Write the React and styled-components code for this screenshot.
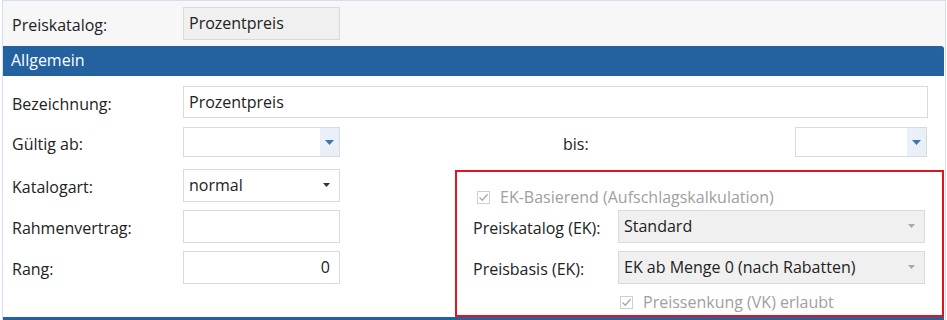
import React from 'react'
import styled, { createGlobalStyle } from 'styled-components'

const GlobalStyle = createGlobalStyle`
    html, body { margin: 0; padding: 0; background: #ffffff; }
    body { font-family: "Open Sans", "Noto Sans", sans-serif; font-size: 16px; color: #222; }
`

function Arrow({ kind }) {
    if (kind === 'date') {
        return (
            <svg width="9" height="5" viewBox="0 0 9 5"><path d="M0 0H9L4.5 5Z" fill="#4a70a8" /></svg>
        )
    }
    return (
        <svg width="7" height="4" viewBox="0 0 7 4"><path d="M0 0H7L3.5 4Z" fill={kind === 'dark' ? '#333' : '#a8a8a8'} /></svg>
    )
}

function Check() {
    return (
        <CheckBox>
            <svg width="11" height="11" viewBox="0 0 11 11">
                <path d="M1.5 5.5L4.3 8.3L9.6 2.2" fill="none" stroke="#a8a8a8" strokeWidth="1.3" />
            </svg>
        </CheckBox>
    )
}

export default function App() {
    return (
        <Page>
            <GlobalStyle />
            <Panel>
                <TopArea>
                    <Label>Preiskatalog:</Label>
                    <Field $w={157} $h={33} $grey>Prozentpreis</Field>
                </TopArea>
                <SectionHeader>Allgemein</SectionHeader>
                <Body>
                    <Row $h={32} $mb={9}>
                        <Label>Bezeichnung:</Label>
                        <Field $grow $h={32}>Prozentpreis</Field>
                    </Row>
                    <Row $h={30} $mb={12}>
                        <Label>Gültig ab:</Label>
                        <Field $w={157} $h={30} $noPad>
                            <span />
                            <DateButton><Arrow kind="date" /></DateButton>
                        </Field>
                        <BisLabel>bis:</BisLabel>
                        <Field $w={132} $h={30} $noPad>
                            <span />
                            <DateButton><Arrow kind="date" /></DateButton>
                        </Field>
                    </Row>
                    <Lower>
                        <LeftCol>
                            <Row $h={33}>
                                <Label>Katalogart:</Label>
                                <Field $w={157} $h={33}>
                                    <span>normal</span>
                                    <Arrow kind="dark" />
                                </Field>
                            </Row>
                            <Row $h={33}>
                                <Label>Rahmenvertrag:</Label>
                                <Field $w={157} $h={33} />
                            </Row>
                            <Row $h={33}>
                                <Label>Rang:</Label>
                                <Field $w={157} $h={33} $right>0</Field>
                            </Row>
                        </LeftCol>
                        <Highlight>
                            <CheckRow $ml={18}>
                                <Check />
                                <span>EK-Basierend (Aufschlagskalkulation)</span>
                            </CheckRow>
                            <EkRow>
                                <EkLabel>Preiskatalog (EK):</EkLabel>
                                <Field $w={307} $h={33} $grey>
                                    <span>Standard</span>
                                    <Arrow kind="light" />
                                </Field>
                            </EkRow>
                            <EkRow>
                                <EkLabel>Preisbasis (EK):</EkLabel>
                                <Field $w={307} $h={33} $grey>
                                    <span>EK ab Menge 0 (nach Rabatten)</span>
                                    <Arrow kind="light" />
                                </Field>
                            </EkRow>
                            <CheckRow $ml={161}>
                                <Check />
                                <span>Preissenkung (VK) erlaubt</span>
                            </CheckRow>
                        </Highlight>
                    </Lower>
                </Body>
                <SectionBar />
            </Panel>
        </Page>
    )
}

const Page = styled.div`
    width: 947px;
    height: 320px;
    overflow: hidden;
    background: #ffffff;
`

const Panel = styled.div`
    margin-left: 2px;
    width: 942px;
    border-left: 1px solid #d3dff0;
    border-right: 1px solid #d3dff0;
    border-top: 1px solid #d3dff0;
`

const TopArea = styled.div`
    height: 45px;
    background: #f7f7f7;
    display: flex;
    align-items: center;
    box-sizing: border-box;
`

const Label = styled.div`
    width: 171px;
    padding-left: 9px;
    padding-top: 3px;
    flex-shrink: 0;
    color: #222;
`

const Field = styled.div`
    box-sizing: border-box;
    width: ${p => (p.$grow ? 'auto' : p.$w + 'px')};
    flex: ${p => (p.$grow ? '1' : '0 0 auto')};
    margin-right: ${p => (p.$grow ? '17px' : '0')};
    height: ${p => p.$h}px;
    border: 1px solid #dadada;
    background: ${p => (p.$grey ? '#f0f0f0' : '#ffffff')};
    display: flex;
    align-items: center;
    justify-content: ${p => (p.$right ? 'flex-end' : 'space-between')};
    padding: ${p => (p.$noPad ? '0' : '0 9px 1px 5px')};
    color: #222;
    white-space: nowrap;
`

const DateButton = styled.div`
    width: 19px;
    height: 100%;
    background: #e9f0fa;
    display: flex;
    align-items: center;
    justify-content: center;
`

const SectionHeader = styled.div`
    height: 30px;
    margin-right: 1px;
    background: #23629f;
    border-top-right-radius: 3px;
    color: #ffffff;
    display: flex;
    align-items: center;
    padding-left: 8px;
    padding-bottom: 2px;
    box-sizing: border-box;
`

const SectionBar = styled.div`
    height: 30px;
    margin-right: 1px;
    background: #23629f;
`

const Body = styled.div`
    padding-top: 10px;
    background: #ffffff;
`

const Row = styled.div`
    display: flex;
    align-items: center;
    height: ${p => p.$h}px;
    margin-bottom: ${p => p.$mb || 0}px;
`

const BisLabel = styled.div`
    width: 232px;
    padding-left: 223px;
    padding-top: 3px;
    color: #222;
`

const Lower = styled.div`
    display: flex;
    height: 148px;
`

const LeftCol = styled.div`
    width: 452px;
    display: flex;
    flex-direction: column;
    gap: 8px;
`

const Highlight = styled.div`
    margin-top: 1px;
    width: 489px;
    height: 147px;
    box-sizing: border-box;
    border: 2px solid #e2141d;
    padding-top: 14px;
    display: flex;
    flex-direction: column;
`

const CheckRow = styled.div`
    display: flex;
    align-items: center;
    gap: 10px;
    height: 22px;
    margin-left: ${p => p.$ml}px;
    color: #a0a0a0;
    margin-bottom: 2px;
    &:last-child { margin-top: -1px; margin-bottom: 0; }
`

const CheckBox = styled.div`
    width: 13px;
    height: 13px;
    box-sizing: border-box;
    border: 1px solid #cfcfcf;
    display: flex;
    align-items: center;
    justify-content: center;
    margin-left: 2px;
    margin-top: 1px;
`

const EkRow = styled.div`
    display: flex;
    align-items: center;
    margin-bottom: 8px;
`

const EkLabel = styled.div`
    width: 145px;
    padding-left: 16px;
    padding-top: 3px;
    color: #222;
`
